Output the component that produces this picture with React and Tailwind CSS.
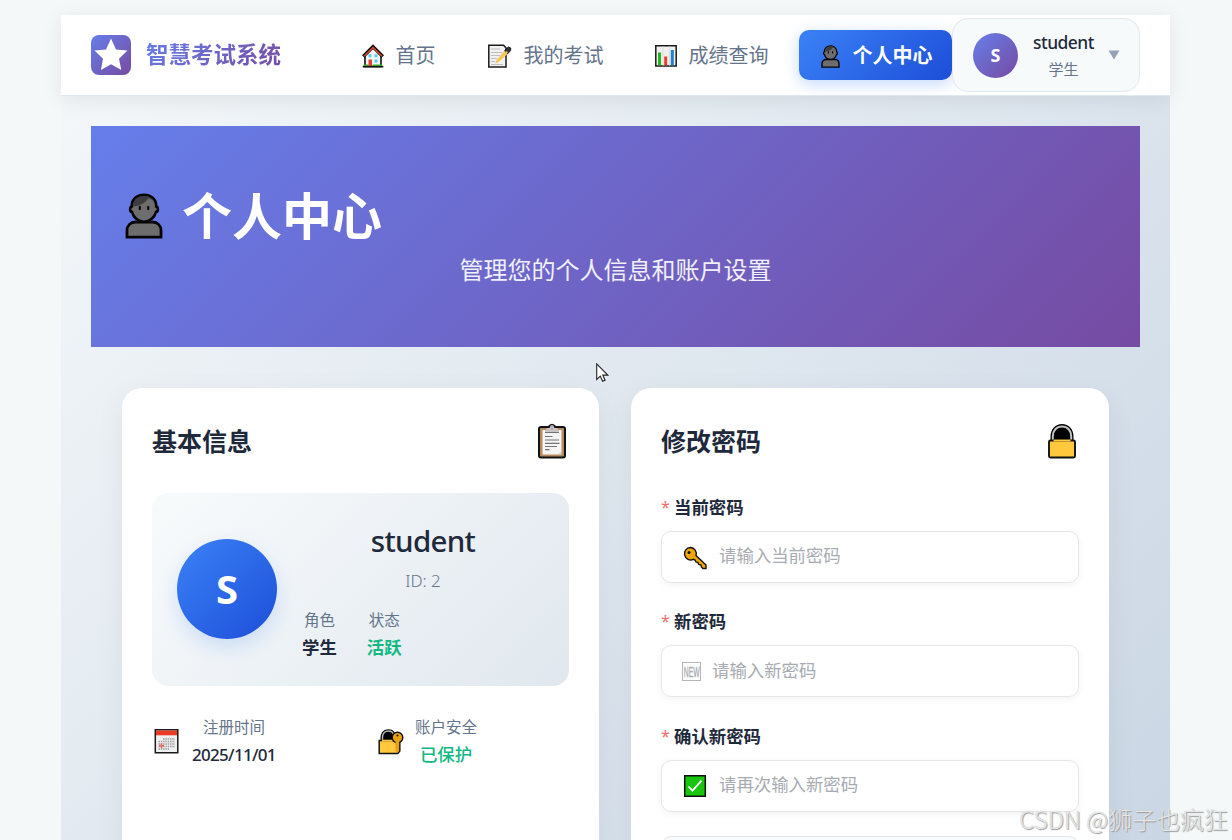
import React from 'react';

const HomeIcon = () => (
    <svg className="w-6 h-6" viewBox="0 0 24 24">
        <path d="M4 11v11.5h16V11L12 3.5z" fill="#f4f4f4" stroke="#111" strokeWidth="1.6" />
        <path d="M2.2 12.5 12 2.7l9.8 9.8" fill="none" stroke="#111" strokeWidth="3.4" />
        <path d="M3 12.3 12 3.4l9 8.9" fill="none" stroke="#e04a32" strokeWidth="1.4" />
        <path d="M7.5 10.2h3v3h-3zM13.5 10.2h3v3h-3zM13.5 15.5h3v3h-3z" fill="#55cdf2" />
        <path d="M7.5 15.5h3.5V22H7.5z" fill="#e8412b" />
        <path d="M2.5 20.5h5V22h-5zM11.5 20.5h9.8V22h-9.8z" fill="#35b62b" />
        <path d="M1.7 22.7h20.6" stroke="#111" strokeWidth="1.6" />
    </svg>
);

const MemoIcon = () => (
    <svg className="w-[26px] h-6" viewBox="0 0 26 24">
        <path d="M2.8 1.3h14.700l2.500 2.500v19.100H2.800z" fill="#f2f2f2" stroke="#1a1a1a" strokeWidth="1.5" />
        <path d="M5 5h9M5 8.500h11M5 11.500h9M5 14.500h6M5 17.500h4M5 20.500h12" stroke="#b5b5b5" strokeWidth=".9" />
        <path d="m19.500 5.500 3.500 3L12.500 18.200l-3.300 1.300L10.500 16z" fill="#f6c75a" />
        <path d="m18.500 6.500 4-3.500 2.300 1.200-.3 2.600-3.300 3.200" fill="#333" stroke="#111" strokeWidth="1" />
        <path d="m20 7.800 1.300 1.200" stroke="#f6c75a" strokeWidth="2" />
    </svg>
);

const ChartIcon = () => (
    <svg className="w-6 h-6" viewBox="0 0 24 24">
        <path d="M1.800 1.800h20.400v20.300H1.800z" fill="#f0f0f0" stroke="#1a1a1a" strokeWidth="1.500" />
        <path d="M9 2.500v19M15.500 2.500v19" stroke="#dedede" strokeWidth="1" />
        <path d="M4 8.500h3v12.800H4z" fill="#28b41e" />
        <path d="M10.200 12.500h3v8.800h-3z" fill="#ec4128" />
        <path d="M16.800 6h3v15.300h-3z" fill="#1c80d4" />
    </svg>
);

const PersonIcon = ({ className }) => (
    <svg className={className} viewBox="0 0 37 46">
        <path
            d="M1.500 44.200V37.500c0-5 3.500-8.500 8.500-8.500h17c5 0 8.500 3.500 8.500 8.500v6.700z"
            fill="#6d6d6d"
            stroke="#050505"
            strokeWidth="2.800"
        />
        <path
            d="M18.500 1.700c-7 0-12.200 4.600-12.200 11.100v.7c-2.300.8-2.300 5 .3 5.600 1.500 5.800 6.300 9.600 11.900 9.600s10.400-3.800 11.900-9.600c2.600-.6 2.600-4.800.3-5.600v-.7c0-6.500-5.200-11.100-12.200-11.100z"
            fill="#6d6d6d"
            stroke="#050505"
            strokeWidth="2.600"
        />
        <path d="M7.500 13.500C8 7 12 3 18.500 3c5 0 8.500 2 10.300 6.200-2-2.500-4-3.700-6-3.700-3.800 5-8.500 7.500-15.300 8z" fill="#3d3d3d" />
        <ellipse cx="14.300" cy="15" rx="1.200" ry="2.300" fill="#050505" />
        <ellipse cx="22.700" cy="15" rx="1.200" ry="2.300" fill="#050505" />
    </svg>
);

const ClipboardIcon = () => (
    <svg className="w-[30px] h-[36px]" viewBox="0 0 30 36">
        <rect x="2" y="4" width="26" height="30.500" rx="2" fill="#b78b5e" stroke="#111" strokeWidth="2" />
        <path d="M5.500 7h19v24.500h-19z" fill="#f5f5f5" />
        <path d="M8 7.500 10 5h2.500c.5-3 4.500-3 5 0H20l2 2.500v1.700H8z" fill="#c9c4c4" />
        <path d="M10.500 4c2-.2 2-2.500 4.500-2.500S17.500 3.800 19.500 4" fill="none" stroke="#111" strokeWidth="1.400" />
        <circle cx="15" cy="5.500" r="1" fill="#a99" />
        <path d="M8 9.500h14M8 13.500h7.500M8 17h14M8 20.300h14.500M8 23.500h12M8 26.700h4.500" stroke="#747474" strokeWidth="1.200" />
        <path d="m24.500 28-3 3.500h3z" fill="#ccc" />
    </svg>
);

const LockIcon = () => (
    <svg className="w-[30px] h-[36px]" viewBox="0 0 30 36">
        <path d="M3.500 20V13.500C3.500 6 8.500 1 15 1s11.500 5 11.500 12.500V20z" fill="#000" />
        <path d="M5.800 18v-4.500c0-6 3.600-10 9.200-10s9.200 4 9.200 10V18" fill="none" stroke="#c2c2c2" strokeWidth="2" />
        <rect x="2" y="17.500" width="26" height="17" rx="1.500" fill="#ffc83d" stroke="#111" strokeWidth="1.900" />
        <path d="M6.500 17.500h17" stroke="#ffc83d" strokeWidth="1.900" />
    </svg>
);

const CalendarIcon = () => (
    <svg className="w-[26px] h-[26px]" viewBox="0 0 26 26">
        <path d="M2.300 1.800h22.500v23H2.300z" fill="#f0f0f0" stroke="#1a1a1a" strokeWidth="1.500" />
        <path d="M3 2.500h21v4.800H3z" fill="#ec3b24" />
        <path
            d="M10 11h12M5.500 13.500H22M5.500 16H22M5.500 18.500H22M5.500 21H16"
            stroke="#9c9c9c"
            strokeWidth="1.500"
            strokeDasharray="1.500 .8"
        />
        <path d="M6 17.800h5M8.500 15.300v5" stroke="#e66a5a" strokeWidth="1.600" />
    </svg>
);

const SecureIcon = () => (
    <svg className="w-[27px] h-[27px]" viewBox="0 0 27 27">
        <path d="M3.500 13V9.500C3.500 4.500 7 1.200 11.500 1.200S19 4.500 19 9.500V13z" fill="#000" />
        <path d="M5.500 13V9.500C5.500 5.500 7.800 3 11.500 3s5 2 5.700 5" fill="none" stroke="#bdbdbd" strokeWidth="1.400" />
        <path d="M2.200 12.500h20.600V23l-2 2.500H2.200z" fill="#ffc83d" stroke="#111" strokeWidth="1.500" />
        <path d="M5 12.500h14" stroke="#ffc83d" strokeWidth="1.500" />
        <path d="M18.500 13h3.600v10l-1.600 1.500-2-1.500z" fill="#eba00f" />
        <circle cx="20.500" cy="9.500" r="5.300" fill="#eba00f" stroke="#111" strokeWidth="1.400" />
        <path d="M18.500 13h3.600v4h-3.600z" fill="#eba00f" />
        <circle cx="20.500" cy="7.500" r="1" fill="#111" />
    </svg>
);

const KeyIcon = () => (
    <svg className="w-6 h-6" viewBox="0 0 24 24">
        <path
            d="M7.500 1.500a6.200 6.200 0 1 0 2.800 11.800l1.700.7 1 2 2 .5.700 2 2.300.5.500 2.200 1.500 1.300h3V19L13 9.500a6.200 6.200 0 0 0-5.500-8z"
            fill="#eda60c"
            stroke="#151515"
            strokeWidth="1.400"
        />
        <circle cx="6" cy="6.500" r="1.500" fill="#111" />
    </svg>
);

const NewIcon = () => (
    <svg className="w-[19px] h-[19px]" viewBox="0 0 19 19">
        <rect x=".5" y=".5" width="18" height="18" fill="none" stroke="#b4b6b9" />
        <text
            transform="translate(1.800 14.800) scale(.47 1)"
            fill="#a8abb2"
            stroke="#a8abb2"
            strokeWidth=".4"
            fontSize="14.500"
            fontFamily="Liberation Sans, sans-serif"
        >
            NEW
        </text>
    </svg>
);

const CheckIcon = () => (
    <svg className="w-6 h-6" viewBox="0 0 24 24">
        <path d="M1.700 1.700h20.600v20.600H1.700z" fill="#18c50d" stroke="#111" strokeWidth="1.500" />
        <path d="m5.500 12.500 4 4.200 9-10" fill="none" stroke="#fff" strokeWidth="1.800" />
    </svg>
);

const navItems = [
    { label: '首页', icon: <HomeIcon />, slot: 'w-[35px]' },
    { label: '我的考试', icon: <MemoIcon />, slot: 'w-[38px]' },
    { label: '成绩查询', icon: <ChartIcon />, slot: 'w-[35px]' },
];

const passwordFields = [
    { label: '当前密码', placeholder: '请输入当前密码', icon: <KeyIcon />, slot: 'w-[37px] pl-px pt-[2px]' },
    { label: '新密码', placeholder: '请输入新密码', icon: <NewIcon />, slot: 'w-[30px]' },
    { label: '确认新密码', placeholder: '请再次输入新密码', icon: <CheckIcon />, slot: 'w-[37px] pl-px pt-px' },
];

const Header = () => (
    <header className="relative z-10 flex items-center h-[81px] px-[30px] bg-white border-b border-[#e2e8f0] shadow-[0_4px_20px_rgba(0,0,0,0.08)]">
        <div className="flex items-center gap-[15px] w-[249.500px] shrink-0">
            <div className="w-10 h-10 rounded-lg bg-[linear-gradient(135deg,#667eea,#764ba2)]">
                <svg className="w-10 h-10" viewBox="0 0 40 40">
                    <path d="m20 3.500 5 11 11.500 1-8.500 8.300 2.300 11.200L20 29.200 9.900 35l2.100-11.200-8.500-8.300 11.500-1z" fill="#fff" />
                </svg>
            </div>
            <span className="text-[22.500px] leading-8 font-bold text-transparent bg-clip-text bg-[linear-gradient(135deg,#667eea,#764ba2)]">
                智慧考试系统
            </span>
        </div>
        <nav className="flex gap-[10px]">
            {navItems.map((item) => (
                <a key={item.label} className="flex items-center h-[50px] px-5 text-xl text-[#64748b] whitespace-nowrap">
                    <span className={`${item.slot} pt-px shrink-0`}>{item.icon}</span>
                    <span className="pt-[2px]">{item.label}</span>
                </a>
            ))}
            <a className="flex items-center w-[153.500px] h-[50px] pl-5 rounded-[10px] text-xl font-bold text-white whitespace-nowrap bg-[linear-gradient(135deg,#3b82f6,#1d4ed8)] shadow-[0_4px_15px_rgba(59,130,246,0.3)]">
                <span className="w-[34px] pl-[2px] pt-[2px] shrink-0">
                    <PersonIcon className="w-[19px] h-[23px]" />
                </span>
                <span className="pt-[2px]">个人中心</span>
            </a>
        </nav>
        <div className="flex items-center w-[188px] h-[74px] pl-5 rounded-2xl bg-[#f7fafb] border border-[#e2e8ee]">
            <div className="flex items-center justify-center w-[45px] h-[45px] pt-px rounded-full text-[18px] font-bold text-white bg-[linear-gradient(135deg,#667eea,#764ba2)]">
                S
            </div>
            <div className="w-[61px] ml-[15px] text-center">
                <div className="text-[17.400px] leading-[27px] font-medium tracking-[-0.500px] text-[#1e293b] whitespace-nowrap">student</div>
                <div className="text-[15px] leading-[26px] text-[#64748b]">学生</div>
            </div>
            <svg className="w-3 h-[10px] ml-[14px]" viewBox="0 0 12 10">
                <path d="M.5.500h11L6 9.500z" fill="#94a3b8" />
            </svg>
        </div>
    </header>
);

const Hero = () => (
    <section className="h-[221px] pt-[53px] bg-[linear-gradient(135deg,#667eea,#764ba2)]">
        <h1 className="flex items-center h-[74px] pl-[34px] text-[50px] font-bold text-white">
            <PersonIcon className="w-[38px] h-[46px] mr-[19px]" />
            个人中心
        </h1>
        <p className="text-center text-2xl leading-[34px] text-white/90">管理您的个人信息和账户设置</p>
    </section>
);

const CardHeader = ({ title, icon }) => (
    <div className="flex items-center justify-between h-[46px]">
        <h2 className="pt-[2px] text-[25px] font-bold text-[#1e293b]">{title}</h2>
        <div className="mr-[2px]">{icon}</div>
    </div>
);

const ProfileCard = () => (
    <div className="w-[477px] p-[30px] rounded-[20px] bg-white shadow-[0_8px_30px_rgba(0,0,0,0.06)]">
        <CardHeader title="基本信息" icon={<ClipboardIcon />} />
        <div className="flex items-center gap-[25px] h-[193px] mt-[29px] px-[25px] rounded-2xl bg-[linear-gradient(135deg,#f8fbfc,#e0e7ee)]">
            <div className="flex items-center justify-center w-[100px] h-[100px] -mt-px shrink-0 rounded-full text-[40px] font-bold text-white bg-[linear-gradient(135deg,#3b82f6,#1d4ed8)] shadow-[0_8px_20px_rgba(59,130,246,0.2)]">
                S
            </div>
            <div className="flex-1 -mt-px">
                <div className="text-center text-[29.500px] leading-[48px] font-medium tracking-[-0.700px] text-[#1e293b]">student</div>
                <div className="text-center text-[17px] leading-[30px] font-light text-[#64748b] pt-px">ID: 2</div>
                <div className="flex gap-[30px] mt-[11px] text-center">
                    <div>
                        <div className="text-[15.500px] leading-[27px] text-[#64748b]">角色</div>
                        <div className="text-[17.400px] leading-[27px] font-bold text-[#1e293b]">学生</div>
                    </div>
                    <div>
                        <div className="text-[15.500px] leading-[27px] text-[#64748b]">状态</div>
                        <div className="text-[17.400px] leading-[27px] font-bold text-[#10b981]">活跃</div>
                    </div>
                </div>
            </div>
        </div>
        <div className="grid grid-cols-2 gap-[31px] mt-[28px]">
            <div className="flex items-center gap-[13px] pl-px">
                <CalendarIcon />
                <div className="text-center whitespace-nowrap">
                    <div className="text-[15.500px] leading-[27px] text-[#64748b]">注册时间</div>
                    <div className="text-[17px] leading-[27px] font-medium text-[#1e293b] tracking-[-0.700px]">2025/11/01</div>
                </div>
            </div>
            <div className="flex items-center gap-[11px] pl-px">
                <SecureIcon />
                <div className="text-center whitespace-nowrap">
                    <div className="text-[15.500px] leading-[27px] text-[#64748b]">账户安全</div>
                    <div className="text-[17.400px] leading-[27px] font-medium text-[#10b981]">已保护</div>
                </div>
            </div>
        </div>
    </div>
);

const PasswordCard = () => (
    <div className="w-[478px] p-[30px] rounded-[20px] bg-white shadow-[0_8px_30px_rgba(0,0,0,0.06)]">
        <CardHeader title="修改密码" icon={<LockIcon />} />
        <div className="flex flex-col gap-[25.400px] mt-[30px]">
            {passwordFields.map((field) => (
                <div key={field.label}>
                    <label className="flex items-center h-[26px] text-[17.400px] font-bold text-[#1e293b]">
                        <span className="w-[13px] text-base font-normal text-[#f56c6c]">*</span>
                        {field.label}
                    </label>
                    <div className="flex items-center h-[52px] mt-[11px] pl-5 rounded-[10px] border border-[#e4e7ea] text-[17.400px] text-[#a8abb2] shadow-[0_2px_8px_rgba(0,0,0,0.05)]">
                        <span className={`${field.slot} shrink-0`}>{field.icon}</span>
                        <span className="pb-[3px]">{field.placeholder}</span>
                    </div>
                </div>
            ))}
            <div className="h-[100px] -mt-px rounded-[10px] border border-[#dfe6ec] bg-[#f8fafb]" />
        </div>
    </div>
);

export default function App() {
    return (
        <div className="relative h-[840px] overflow-hidden bg-[#f4f8f9] pt-[15px] pl-[61px] [font-family:'Noto_Sans','Noto_Sans_CJK_SC',sans-serif]">
            <div className="w-[1109px]">
                <Header />
                <main className="h-[1040px] px-[30px] pt-[30px] bg-[linear-gradient(135deg,#f3f7f9_0%,#c4d1e1_100%)]">
                    <Hero />
                    <div className="flex gap-8 h-[700px] mt-[41px] px-[31px]">
                        <ProfileCard />
                        <PasswordCard />
                    </div>
                </main>
            </div>
            <svg className="absolute left-[596px] top-[363px] w-[13px] h-[20px]" viewBox="0 0 13 20">
                <path d="M.7.900v15.600l3.600-3.400 2.300 5.200 2.500-1.100-2.300-5.100h5z" fill="#fff" stroke="#222" strokeWidth="1.100" />
            </svg>
            <div className="absolute right-1 bottom-px text-[24px] leading-[40px] font-light whitespace-nowrap text-[#e6e8ea] [font-family:'Noto_Sans_CJK_SC',sans-serif] [text-shadow:1px_1px_1px_#999,0_0_1px_#bbb]">
                CSDN @狮子也疯狂
            </div>
        </div>
    );
}
